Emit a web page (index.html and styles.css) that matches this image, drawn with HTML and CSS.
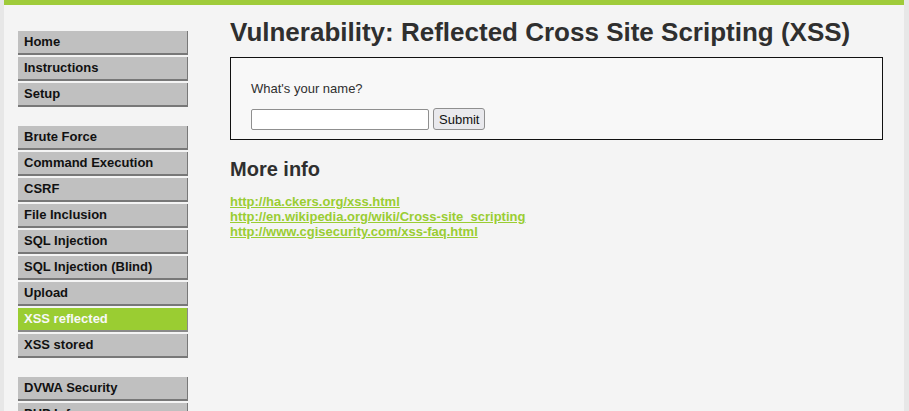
FILE: index.html
```html
<!DOCTYPE html>
<html>
<head>
<meta charset="utf-8">
<title>DVWA</title>
<link rel="stylesheet" href="styles.css">
</head>
<body>
<div class="container">
  <div class="header"></div>
  <div class="content">
    <div class="menu">
      <ul class="menu-group">
        <li><a href="#">Home</a></li>
        <li><a href="#">Instructions</a></li>
        <li><a href="#">Setup</a></li>
      </ul>
      <ul class="menu-group">
        <li><a href="#">Brute Force</a></li>
        <li><a href="#">Command Execution</a></li>
        <li><a href="#">CSRF</a></li>
        <li><a href="#">File Inclusion</a></li>
        <li><a href="#">SQL Injection</a></li>
        <li><a href="#">SQL Injection (Blind)</a></li>
        <li><a href="#">Upload</a></li>
        <li class="selected"><a href="#">XSS reflected</a></li>
        <li><a href="#">XSS stored</a></li>
      </ul>
      <ul class="menu-group">
        <li><a href="#">DVWA Security</a></li>
        <li><a href="#">PHP Info</a></li>
      </ul>
    </div>
    <div class="main">
      <h1 class="title">Vulnerability: Reflected Cross Site Scripting (XSS)</h1>
      <div class="vuln-box">
        <form class="form">
          <p class="label">What's your name?</p>
          <div class="row">
            <input class="name-input" type="text" name="name">
            <button class="submit" type="button">Submit</button>
          </div>
        </form>
      </div>
      <h2 class="subtitle">More info</h2>
      <ul class="links">
        <li><a href="#">http://ha.ckers.org/xss.html</a></li>
        <li><a href="#">http://en.wikipedia.org/wiki/Cross-site_scripting</a></li>
        <li><a href="#">http://www.cgisecurity.com/xss-faq.html</a></li>
      </ul>
    </div>
  </div>
</div>
</body>
</html>
```
FILE: styles.css
```css
html, body {
  margin: 0;
  padding: 0;
}
body {
  background: #e7e7e7;
  font-family: "Liberation Sans", Arial, sans-serif;
  font-size: 13px;
  line-height: 15px;
  color: #2f2f2f;
  height: 411px;
  overflow: hidden;
}
.container {
  width: 900px;
  margin: 0 0 0 4px;
  background: #f4f4f4;
  min-height: 411px;
}
.header {
  height: 0;
  border-bottom: 5px solid #9fcb3a;
}
.content {
  display: flex;
}
.menu {
  width: 170px;
  margin-left: 14px;
  padding-top: 26px;
}
.menu-group {
  list-style: none;
  margin: 0 0 19px 0;
  padding: 0;
}
.menu-group li {
  margin-bottom: 2px;
}
.menu-group a {
  display: block;
  height: 22px;
  line-height: 22px;
  padding-left: 6px;
  background: #c0c0c0;
  border-bottom: 2px solid #787878;
  border-right: 1px solid #787878;
  color: #111;
  font-weight: bold;
  font-size: 13px;
  text-decoration: none;
}
.menu-group li.selected a {
  background: #9acd32;
  color: #f8f8f8;
  border-color: #8a8a8a;
}
.main {
  margin-left: 42px;
  width: 653px;
}
.title {
  margin: 11px 0 9px 0;
  font-size: 26px;
  line-height: 32px;
  font-weight: bold;
  color: #2f2f2f;
}
.vuln-box {
  border: 1px solid #111;
  background: #f8f8f8;
  padding: 20px 20px 10px 20px;
  height: 51px;
}
.label {
  margin: 3px 0 12px 0;
}
.row {
  display: flex;
  align-items: center;
  gap: 4px;
}
.name-input {
  width: 178px;
  height: 21px;
  box-sizing: border-box;
  border: 1px solid #8f8f8f;
  border-radius: 2px;
  background: #fff;
  margin: 0;
}
.submit {
  height: 22px;
  box-sizing: border-box;
  padding: 0 5px;
  font-family: "Liberation Sans", Arial, sans-serif;
  font-size: 13px;
  color: #111;
  background: #e9e9ed;
  border: 1px solid #8f8f8f;
  border-radius: 3px;
  margin: 0;
}
.subtitle {
  margin: 17px 0 13px 0;
  font-size: 20px;
  line-height: 24px;
  font-weight: bold;
  color: #2f2f2f;
}
.links {
  list-style: none;
  margin: 0;
  padding: 0;
}
.links a {
  color: #9acd32;
  font-weight: bold;
  text-decoration: underline;
}
```
